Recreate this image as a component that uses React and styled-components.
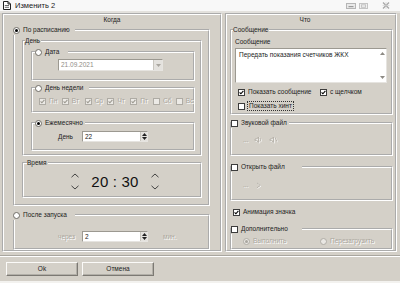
import React from 'react';
import styled, { createGlobalStyle } from 'styled-components';

const GlobalStyle = createGlobalStyle`
  html, body {
    margin: 0;
    padding: 0;
    background: #d4d0c8;
  }
  body {
    font-family: "Liberation Sans", Arial, sans-serif;
    font-size: 6.5px;
    line-height: 8px;
    color: #1c1c1c;
  }
`;

const Window = styled.div`
  width: 400px;
  height: 283px;
  background: #d4d0c8;
  display: flex;
  flex-direction: column;
  overflow: hidden;
  box-sizing: border-box;
  border-bottom: 2px solid #f3f2ef;
`;

const TitleBar = styled.div`
  height: 13px;
  flex: none;
  box-sizing: border-box;
  background: #f8f8f8;
  border-bottom: 2px solid #e3e1dd;
  display: flex;
  align-items: center;
  padding-left: 3px;
`;

const TitleText = styled.span`
  font-size: 7.5px;
  margin-left: 4px;
  color: #1a1a1a;
`;

const WinButtons = styled.div`
  margin-left: auto;
  display: flex;
  align-items: center;
  gap: 3px;
  padding-right: 10px;
`;

const Body = styled.div`
  display: flex;
  gap: 3px;
  padding-left: 2px;
  height: 239px;
  flex: none;
`;

const Panel = styled.section`
  width: ${(p) => p.$w}px;
  height: 239px;
  box-sizing: border-box;
  border: 2px groove #fff;
  display: flex;
  flex-direction: column;
  align-items: flex-start;
  overflow: hidden;
`;

const PanelHeader = styled.div`
  align-self: stretch;
  height: 10px;
  line-height: 10px;
  text-align: center;
  padding-right: ${(p) => p.$pr || 0}px;
`;

const Group = styled.fieldset`
  margin: ${(p) => p.$m || '0'};
  width: ${(p) => p.$w}px;
  height: ${(p) => p.$h}px;
  box-sizing: border-box;
  padding: 0;
  min-width: 0;
  border: 2px groove #fff;
  display: flex;
  flex-direction: column;
  align-items: flex-start;
`;

const Legend = styled.legend`
  margin-left: ${(p) => p.$ml || 0}px;
  width: ${(p) => (p.$w ? `${p.$w}px` : 'auto')};
  height: 10px;
  line-height: 10px;
  padding: 0 1px 0 0;
  display: flex;
  align-items: center;
  gap: 3px;
  box-sizing: border-box;
`;

const Radio = styled.span`
  width: 7px;
  height: 7px;
  flex: none;
  border-radius: 50%;
  box-sizing: border-box;
  border: 1px solid ${(p) => (p.$disabled ? '#b0ada6' : '#6f6c66')};
  background: ${(p) => (p.$disabled ? '#e9e7e3' : '#fff')};
  display: inline-flex;
  align-items: center;
  justify-content: center;

  &::after {
    content: '';
    width: 3px;
    height: 3px;
    border-radius: 50%;
    background: ${(p) =>
      p.$checked ? (p.$disabled ? '#a9a69f' : '#000') : 'transparent'};
  }
`;

const Box = styled.span`
  width: 7px;
  height: 7px;
  flex: none;
  box-sizing: border-box;
  border: 1px solid ${(p) => (p.$disabled ? '#aeaba4' : '#3c3c3c')};
  background: ${(p) => (p.$disabled ? '#eceae6' : '#fff')};
  display: inline-flex;
  align-items: center;
  justify-content: center;
`;

const Label = styled.span`
  white-space: nowrap;
  width: ${(p) => (p.$w ? `${p.$w}px` : 'auto')};
  color: ${(p) => (p.$disabled ? '#aaa69d' : 'inherit')};
  text-shadow: ${(p) => (p.$disabled ? '1px 1px 0 #fff' : 'none')};
`;

const Field = styled.div`
  margin: ${(p) => p.$m || '0'};
  width: ${(p) => p.$w}px;
  height: ${(p) => p.$h}px;
  box-sizing: border-box;
  background: #fff;
  border: 1px solid #9c9991;
  border-right-color: #e6e4e0;
  border-bottom-color: #e6e4e0;
  display: flex;
  align-items: stretch;
`;

const FieldText = styled.span`
  flex: 1;
  padding-left: 2px;
  line-height: ${(p) => p.$lh || 10}px;
  color: ${(p) => (p.$disabled ? '#8f8c86' : 'inherit')};
  white-space: nowrap;
  overflow: hidden;
`;

const SideButton = styled.span`
  width: ${(p) => p.$w || 7}px;
  flex: none;
  box-sizing: border-box;
  background: #e4e2de;
  border-left: 1px solid #c9c6bf;
  display: flex;
  flex-direction: column;
  align-items: center;
  justify-content: ${(p) => (p.$stack ? 'space-around' : 'center')};
`;

const Row = styled.div`
  display: flex;
  align-items: center;
  height: ${(p) => p.$h || 10}px;
  margin: ${(p) => p.$m || '0'};
  gap: ${(p) => p.$gap ?? 3}px;
`;

const WeekGrid = styled.div`
  display: grid;
  grid-template-columns: repeat(7, 22.8px);
  height: 10px;
  margin: 3px 0 0 6px;
`;

const WeekItem = styled.div`
  display: flex;
  align-items: center;
  gap: 3px;
`;

const TimeRow = styled.div`
  align-self: stretch;
  height: 27px;
  display: flex;
  align-items: center;
  justify-content: center;
  gap: 12px;
  padding-left: 6px;
`;

const Chevrons = styled.div`
  display: flex;
  flex-direction: column;
  align-items: center;
  gap: 7px;
`;

const TimeText = styled.span`
  font-size: 15px;
  line-height: 15px;
  color: #111;
  letter-spacing: 0.2px;
`;

const TextArea = styled.div`
  margin: 2px 0 0 3px;
  width: 152px;
  height: 35px;
  box-sizing: border-box;
  background: #fff;
  border: 1px solid #9c9991;
  border-right-color: #e6e4e0;
  border-bottom-color: #e6e4e0;
  display: flex;
`;

const AreaText = styled.span`
  flex: 1;
  padding: 2px 0 0 3px;
  line-height: 8px;
`;

const ScrollCol = styled.div`
  width: 8px;
  display: flex;
  flex-direction: column;
  justify-content: space-between;
  align-items: center;
  padding: 3px 0;
`;

const FocusLabel = styled.span`
  outline: 1px dotted #333;
  outline-offset: 0;
  padding: 0 1px;
  line-height: 8px;
`;

const Separator = styled.div`
  margin-top: 3px;
  height: 0;
  border-top: 1px solid #a9a69f;
  border-bottom: 1px solid #fff;
`;

const Footer = styled.div`
  display: flex;
  gap: 4px;
  padding: 5px 0 0 6px;
`;

const Button = styled.button`
  width: 72px;
  height: 14px;
  padding: 0;
  font: inherit;
  color: #1c1c1c;
  background: #d4d0c8;
  box-sizing: border-box;
  border: 1px solid;
  border-color: #fbfaf8 #7c7973 #7c7973 #fbfaf8;
  box-shadow: inset -1px -1px 0 #b2afa8;
`;

const Check = ({ color = '#000' }) => (
  <svg width="5" height="5" viewBox="0 0 5 5">
    <path d="M0.6 2.4 L1.9 3.8 L4.4 0.9" fill="none" stroke={color} strokeWidth="1.1" />
  </svg>
);

const CheckBox = ({ checked, disabled }) => (
  <Box $disabled={disabled}>{checked && <Check color={disabled ? '#9b988f' : '#000'} />}</Box>
);

const Chevron = ({ down }) => (
  <svg width="8" height="5" viewBox="0 0 8 5">
    <polyline
      points={down ? '0.5,0.8 4,4 7.5,0.8' : '0.5,4.2 4,1 7.5,4.2'}
      fill="none"
      stroke="#333"
      strokeWidth="0.9"
    />
  </svg>
);

const Tri = ({ down, color = '#222' }) => (
  <svg width="5" height="3" viewBox="0 0 5 3">
    <polygon points={down ? '0,0 5,0 2.5,3' : '0,3 5,3 2.5,0'} fill={color} />
  </svg>
);

const DocIcon = () => (
  <svg width="8" height="9" viewBox="0 0 8 9">
    <path d="M0.5 0.5 H5 L7.5 3 V8.5 H0.5 Z" fill="#fff" stroke="#222" />
    <path d="M5 0.5 V3 H7.5" fill="none" stroke="#222" />
    <path d="M1.8 4.5 H6 M1.8 6.3 H6" stroke="#444" strokeWidth="0.8" />
  </svg>
);

const MinIcon = () => (
  <svg width="10" height="6" viewBox="0 0 10 6">
    <rect x="0.5" y="0.5" width="9" height="5" fill="#e9e9e9" stroke="#b5b5b5" />
    <rect x="2.5" y="3" width="5" height="1.2" fill="#9a9a9a" />
  </svg>
);

const MaxIcon = () => (
  <svg width="9" height="6" viewBox="0 0 9 6">
    <rect x="0.5" y="0.5" width="8" height="5" fill="#f0f0f0" stroke="#c4c4c4" />
    <rect x="2.5" y="1.8" width="4" height="2.5" fill="none" stroke="#c4c4c4" />
  </svg>
);

const CloseIcon = () => (
  <svg width="8" height="7" viewBox="0 0 8 7">
    <path d="M1 0.5 L7 6.5 M7 0.5 L1 6.5" stroke="#a8a8a8" strokeWidth="1.3" />
    <path d="M0.5 3.5 H7.5 M4 0 V7" stroke="#cfcfcf" strokeWidth="0.6" />
  </svg>
);

const Speaker = ({ muted }) => (
  <svg width="9" height="8" viewBox="0 0 9 8">
    <g fill="none" stroke="#fff" strokeWidth="0.9" transform="translate(0.7 0.7)">
      <path d="M1 3 H2.5 L4.5 1 V6.5 L2.5 4.6 H1 Z" />
      {muted ? <path d="M6 1.5 L8 5.5" /> : <path d="M6 2 Q7.2 3.7 6 5.5" />}
    </g>
    <g fill="none" stroke="#b3afa7" strokeWidth="0.9">
      <path d="M1 3 H2.5 L4.5 1 V6.5 L2.5 4.6 H1 Z" />
      {muted ? <path d="M6 1.5 L8 5.5" /> : <path d="M6 2 Q7.2 3.7 6 5.5" />}
    </g>
  </svg>
);

const Play = () => (
  <svg width="6" height="7" viewBox="0 0 6 7">
    <path d="M1.6 1.6 L5 4 L1.6 6.4" fill="none" stroke="#fff" strokeWidth="0.9" />
    <path d="M1 1 L4.4 3.4 L1 5.8" fill="none" stroke="#b3afa7" strokeWidth="0.9" />
  </svg>
);

const weekDays = [
  ['Пн', true],
  ['Вт', true],
  ['Ср', true],
  ['Чт', true],
  ['Пт', true],
  ['Сб', false],
  ['Вс', false],
];

const SpinField = ({ value, width = 66 }) => (
  <Field $w={width} $h={11}>
    <FieldText $lh={9}>{value}</FieldText>
    <SideButton $stack>
      <Tri />
      <Tri down />
    </SideButton>
  </Field>
);

const WhenPanel = () => (
  <Panel $w={220}>
    <PanelHeader>Когда</PanelHeader>

    <Group $m="0 0 0 9px" $w={197} $h={181}>
      <Legend $ml={-2} $w={62}>
        <Radio $checked />
        <Label>По расписанию</Label>
      </Legend>

      <Group $m="1px 0 0 7px" $w={180} $h={120}>
        <Legend $ml={1}>
          <Label>День</Label>
        </Legend>

        <Group $m="1px 0 0 7px" $w={164} $h={34}>
          <Legend $ml={2} $w={33}>
            <Radio />
            <Label>Дата</Label>
          </Legend>
          <Field $m="2px 0 0 25px" $w={105} $h={12}>
            <FieldText $disabled>21.09.2021</FieldText>
            <SideButton $w={9}>
              <Tri down color="#a9a69f" />
            </SideButton>
          </Field>
        </Group>

        <Group $m="2px 0 0 7px" $w={164} $h={30}>
          <Legend $ml={2} $w={54}>
            <Radio />
            <Label>День недели</Label>
          </Legend>
          <WeekGrid>
            {weekDays.map(([day, on]) => (
              <WeekItem key={day}>
                <CheckBox checked={on} disabled />
                <Label $disabled>{day}</Label>
              </WeekItem>
            ))}
          </WeekGrid>
        </Group>

        <Group $m="5px 0 0 7px" $w={164} $h={33}>
          <Legend $ml={2} $w={50}>
            <Radio $checked />
            <Label>Ежемесячно</Label>
          </Legend>
          <Row $h={11} $m="3px 0 0 25px" $gap={0}>
            <Label $w={24}>День</Label>
            <SpinField value="22" />
          </Row>
        </Group>
      </Group>

      <Group $m="2px 0 0 7px" $w={180} $h={40}>
        <Legend $ml={3}>
          <Label>Время</Label>
        </Legend>
        <TimeRow>
          <Chevrons>
            <Chevron />
            <Chevron down />
          </Chevrons>
          <TimeText>20 : 30</TimeText>
          <Chevrons>
            <Chevron />
            <Chevron down />
          </Chevrons>
        </TimeRow>
      </Group>
    </Group>

    <Group $m="4px 0 0 9px" $w={197} $h={40}>
      <Legend $ml={-2} $w={62}>
        <Radio />
        <Label>После запуска</Label>
      </Legend>
      <Row $h={11} $m="11px 0 0 43px" $gap={0}>
        <Label $disabled $w={24}>через</Label>
        <SpinField value="2" />
        <Label $disabled style={{ marginLeft: 15 }}>мин.</Label>
      </Row>
    </Group>
  </Panel>
);

const WhatPanel = () => (
  <Panel $w={172}>
    <PanelHeader $pr={12}>Что</PanelHeader>

    <Group $m="0 0 0 3px" $w={163} $h={90}>
      <Legend $ml={1}>
        <Label>Сообщение</Label>
      </Legend>
      <Row $h={8} $m="3px 0 0 3px">
        <Label>Сообщение</Label>
      </Row>
      <TextArea>
        <AreaText>Передать показания счетчиков ЖКХ</AreaText>
        <ScrollCol>
          <Tri color="#8d8a84" />
          <Tri down color="#8d8a84" />
        </ScrollCol>
      </TextArea>
      <Row $m="4px 0 0 6px" $gap={0}>
        <Row style={{ width: 82 }}>
          <CheckBox checked />
          <Label>Показать сообщение</Label>
        </Row>
        <Row>
          <CheckBox checked />
          <Label>с щелчком</Label>
        </Row>
      </Row>
      <Row $m="4px 0 0 6px">
        <CheckBox />
        <FocusLabel>Показать хинт</FocusLabel>
      </Row>
    </Group>

    <Group $m="3px 0 0 3px" $w={163} $h={38}>
      <Legend $ml={-1} $w={58}>
        <CheckBox />
        <Label>Звуковой файл</Label>
      </Legend>
      <Row $m="7px 0 0 11px" $gap={6}>
        <Label $disabled>...</Label>
        <Speaker />
        <Speaker muted />
      </Row>
    </Group>

    <Group $m="6px 0 0 3px" $w={163} $h={39}>
      <Legend $ml={-1} $w={71}>
        <CheckBox />
        <Label>Открыть файл</Label>
      </Legend>
      <Row $m="8px 0 0 11px" $gap={8}>
        <Label $disabled>...</Label>
        <Play />
      </Row>
    </Group>

    <Row $m="6px 0 0 6px">
      <CheckBox checked />
      <Label>Анимация значка</Label>
    </Row>

    <Group $m="7px 0 0 3px" $w={163} $h={26}>
      <Legend $ml={-1} $w={71}>
        <CheckBox />
        <Label>Дополнительно</Label>
      </Legend>
      <Row $m="2px 0 0 11px" $gap={0}>
        <Row style={{ width: 77 }}>
          <Radio $checked $disabled />
          <Label $disabled>Выполнить</Label>
        </Row>
        <Row>
          <Radio $disabled />
          <Label $disabled>Перезагрузить</Label>
        </Row>
      </Row>
    </Group>
  </Panel>
);

export default function App() {
  return (
    <>
      <GlobalStyle />
      <Window>
        <TitleBar>
          <DocIcon />
          <TitleText>Изменить 2</TitleText>
          <WinButtons>
            <MinIcon />
            <MaxIcon />
            <span style={{ width: 8 }} />
            <CloseIcon />
          </WinButtons>
        </TitleBar>
        <Body>
          <WhenPanel />
          <WhatPanel />
        </Body>
        <Separator />
        <Footer>
          <Button>Ok</Button>
          <Button>Отмена</Button>
        </Footer>
      </Window>
    </>
  );
}
